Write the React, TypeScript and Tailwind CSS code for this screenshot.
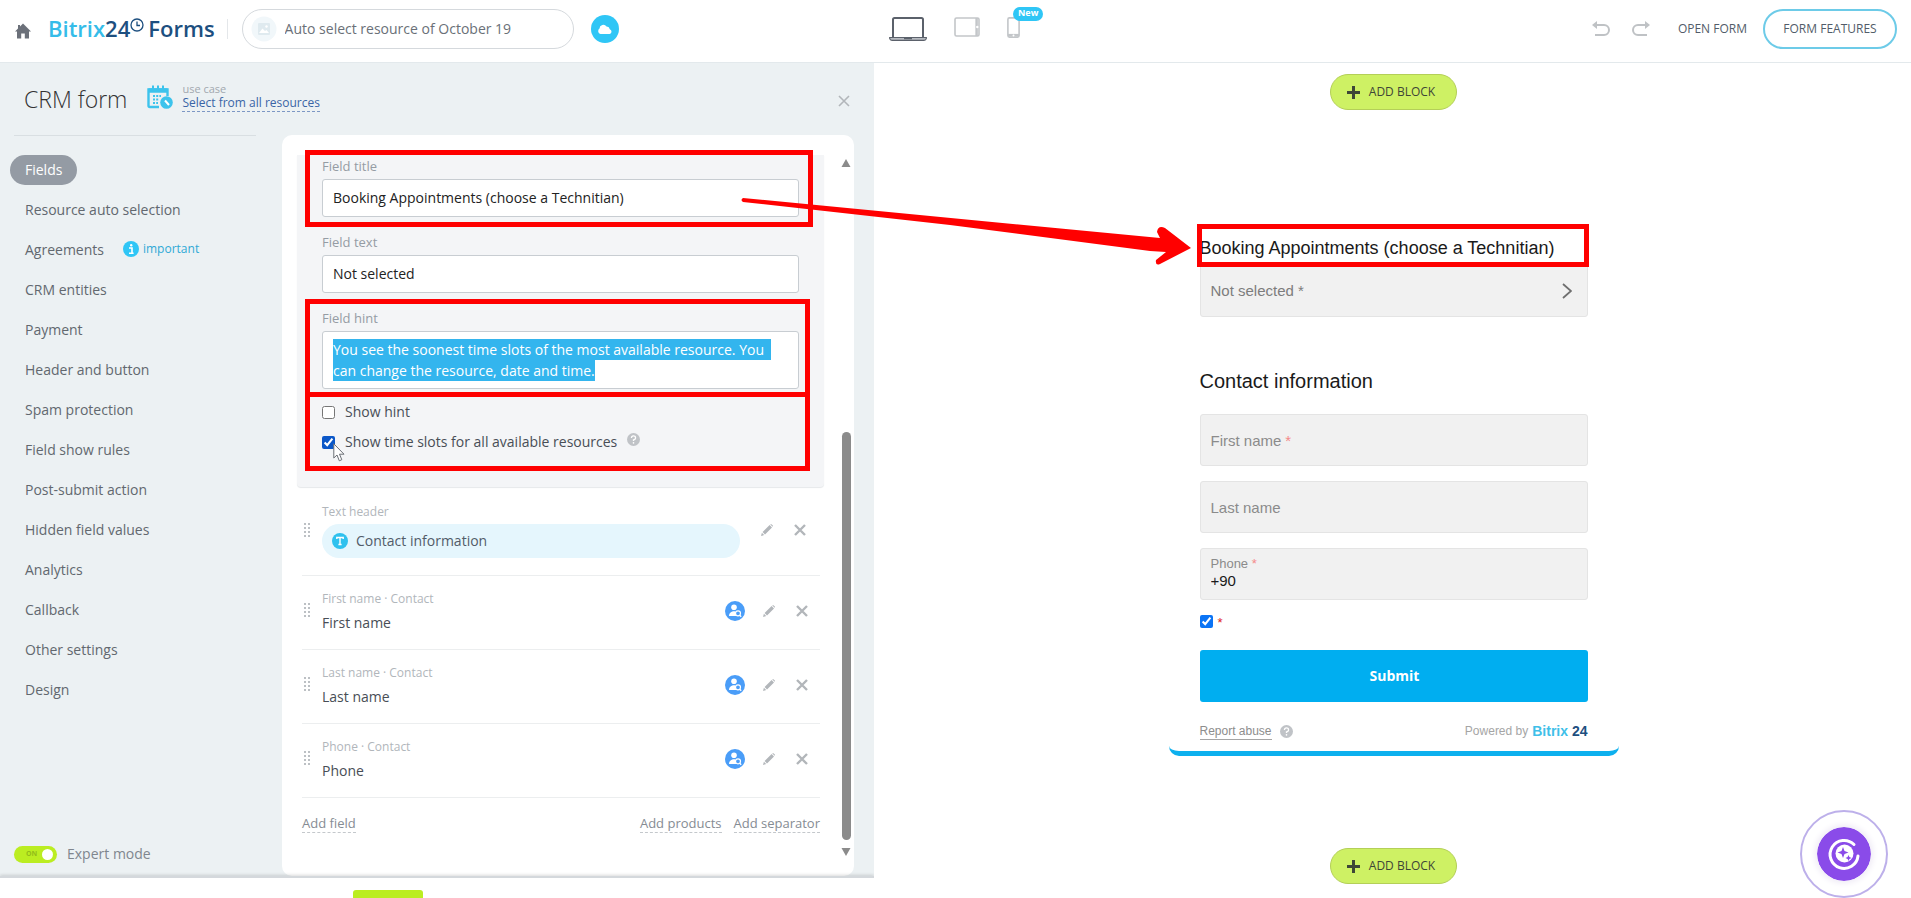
import { useEffect, useRef } from "react";
import type { ReactNode } from "react";

const menu = [
	"Fields",
	"Resource auto selection",
	"Agreements",
	"CRM entities",
	"Payment",
	"Header and button",
	"Spam protection",
	"Field show rules",
	"Post-submit action",
	"Hidden field values",
	"Analytics",
	"Callback",
	"Other settings",
	"Design",
];

const contactFields = ["First name", "Last name", "Phone"];

const App = () => {
	return (
		<div className="relative flex h-screen flex-col overflow-hidden bg-white font-['Open_Sans',sans-serif] text-sm text-[#525c69]">
			<TopBar />
			<main className="grid min-h-0 flex-1 grid-cols-[874fr_1037fr]">
				<Editor />
				<Preview />
			</main>
			<Arrow />
		</div>
	);
};
export default App;

const TopBar = () => {
	return (
		<header className="grid h-[63px] flex-none grid-cols-[889fr_1022fr] border-b border-[#e3e9ec] pb-1">
			<div className="flex items-center pl-[15px]">
				<a href="#home" aria-label="Home">
					<svg viewBox="0 0 16 16" className="mt-1 h-4 w-4 fill-[#6b7079]">
						<path d="M8 0.5 L16 8.6 L14 8.6 L14 15.5 L9.8 15.5 L9.8 10.5 L6.2 10.5 L6.2 15.5 L2 15.5 L2 8.6 L0 8.6 L3 5.5 L3 2 L5 2 L5 3.5 Z" />
					</svg>
				</a>
				<div className="ml-[17px] flex items-center text-[22px] font-semibold text-[#1d4f7f]">
					<span className="text-[#35bce9]">Bitrix</span>
					<span>24</span>
					<svg viewBox="0 0 14 14" className="mb-2 h-3.5 w-3.5 fill-none stroke-[#1d4f7f]" strokeWidth="1.3">
						<circle cx="7" cy="7" r="6" />
						<path d="M7 3.5 V7.5 H10" />
					</svg>
					<span className="ml-1">Forms</span>
				</div>
				<div className="ml-3 h-5 w-px bg-[#e4e7ea]" />
				<label className="ml-3.5 flex h-10 w-[332px] items-center rounded-full border border-[#d5d9dd] pl-2">
					<svg viewBox="0 0 26 26" className="h-[26px] w-[26px]">
						<circle cx="13" cy="13" r="12.5" fill="#f1f7fa" />
						<rect x="7" y="7" width="12" height="12" rx="1" fill="#dfeaef" />
						<path d="M8 17 L11.5 12.5 L14 15 L15.5 14 L18 17 Z" fill="#fff" />
						<circle cx="15.5" cy="10.5" r="1.2" fill="#fff" />
					</svg>
					<input
						aria-label="Form name"
						defaultValue="Auto select resource of October 19"
						className="ml-2 min-w-0 flex-1 bg-transparent text-sm text-[#6a7078] outline-none"
					/>
				</label>
				<button aria-label="Cloud" className="ml-[17px] flex h-7 w-7 items-center justify-center rounded-full bg-[#2fc6f6]">
					<svg viewBox="0 0 16 12" className="h-3 w-4 fill-white">
						<path d="M3.5 11 A3 3 0 0 1 2.5 5.6 A3.8 3.8 0 0 1 9.5 3.6 A3.2 3.2 0 0 1 12.8 6.2 A2.5 2.5 0 0 1 12.6 11 Z" />
					</svg>
				</button>
			</div>
			<div className="flex items-center pr-3.5">
				<button aria-label="Desktop">
					<svg viewBox="0 0 38 24" className="h-6 w-[38px] fill-none stroke-[#5b616b]">
						<path d="M4 20 V2.5 Q4 1 5.5 1 H32.5 Q34 1 34 2.5 V20" strokeWidth="2" />
						<path d="M0.7 20.5 H37.3 V21.5 Q37 23.3 35 23.3 H3 Q1 23.3 0.7 21.5 Z" fill="#b7bbc1" strokeWidth="1.2" />
						<path d="M15 21.5 H23" strokeWidth="1.5" />
					</svg>
				</button>
				<button aria-label="Tablet" className="ml-[27px]">
					<svg viewBox="0 0 26 20" className="mb-1 h-5 w-[26px] fill-none stroke-[#c3c6c9]">
						<rect x="1" y="1" width="24" height="18" rx="1.5" strokeWidth="1.6" />
						<path d="M22.6 1 V19" strokeWidth="2.5" />
						<circle cx="23.3" cy="10" r="1.2" fill="#fff" stroke="none" />
					</svg>
				</button>
				<button aria-label="Phone" className="relative ml-[27px]">
					<svg viewBox="0 0 13 21" className="mb-1 h-[21px] w-[13px] fill-none stroke-[#c3c6c9]">
						<rect x="0.9" y="0.9" width="11.2" height="19.2" rx="1.5" strokeWidth="1.6" />
						<path d="M1 18.2 H12" strokeWidth="2.6" />
						<circle cx="6.5" cy="18.5" r="1" fill="#fff" stroke="none" />
					</svg>
					<span className="absolute -top-2.5 left-1.5 flex h-3.5 items-center rounded-full bg-[#2fc6f6] px-[5px] text-[9px] font-bold text-white">New</span>
				</button>
				<div className="flex-1" />
				<button aria-label="Undo">
					<UndoIcon />
				</button>
				<button aria-label="Redo" className="ml-[22px] -scale-x-100">
					<UndoIcon />
				</button>
				<a href="#open" className="ml-7 text-xs text-[#525c69]">
					OPEN FORM
				</a>
				<button className="ml-4 h-10 w-[134px] rounded-full border-2 border-[#6dcbe8] text-xs">FORM FEATURES</button>
			</div>
		</header>
	);
};

const UndoIcon = () => {
	return (
		<svg viewBox="0 0 18 16" className="h-4 w-[18px] fill-none stroke-[#bfc2c5]" strokeWidth="2">
			<path d="M4 4 H12 A5 5 0 0 1 12 14 H3" />
			<path d="M5 0 L0 4 L5 8 Z" fill="#bfc2c5" stroke="none" />
		</svg>
	);
};

const Editor = () => {
	return (
		<section className="flex min-h-0 min-w-0 flex-col bg-[#ecf1f3]">
			<div className="flex h-[72px] flex-none items-start pl-6 pr-6 pt-5">
				<h1 className="text-[23px] leading-8 font-light text-[#333]">CRM form</h1>
				<svg viewBox="0 0 26 24" className="ml-5 mt-0.5 h-6 w-[26px] fill-none stroke-[#3cc3ec]">
					<path d="M12 22 H3 Q1.5 22 1.5 20.5 V4.5 H20.5 V11" strokeWidth="2.4" />
					<path d="M1.5 5.5 H20.5" strokeWidth="4.5" />
					<path d="M6 0.5 V4 M11 0.5 V4 M16 0.5 V4" strokeWidth="2" />
					<path d="M6 11 H14 M6 14.5 H12 M6 18 H11" strokeWidth="2" strokeDasharray="2 1.2" />
					<circle cx="19.5" cy="17.5" r="6.3" fill="#3cc3ec" stroke="none" />
					<path d="M18 15.5 L22 20" stroke="#fff" strokeWidth="2" />
				</svg>
				<div className="ml-[9px] flex flex-col items-start">
					<span className="text-[11px] leading-3 text-[#a2a8af]">use case</span>
					<a href="#case" className="border-b border-dashed border-[#7d97c4] text-xs leading-4 text-[#3a65a6]">
						Select from all resources
					</a>
				</div>
				<button aria-label="Close" className="ml-auto mt-3">
					<CrossIcon thin />
				</button>
			</div>
			<div className="flex min-h-0 flex-1">
				<Sidebar />
				<div className="mr-5 flex min-w-0 flex-1 rounded-[10px] bg-white pt-5 pl-[15px]">
					<FieldList />
					<Scrollbar />
				</div>
			</div>
			<footer className="relative flex h-[22px] flex-none items-start justify-center overflow-hidden border-t-2 border-[#d4d8dc] bg-white pt-3 pr-[98px] shadow-[0_-1px_3px_rgba(0,0,0,0.15)]">
				<button aria-label="Save" className="h-10 w-[70px] flex-none rounded-[3px] bg-[#bbed21]" />
			</footer>
		</section>
	);
};

const Sidebar = () => {
	return (
		<aside className="flex w-[282px] flex-none flex-col pb-3">
			<nav className="ml-3.5 mr-[26px] flex flex-col items-start border-t border-[#d9dfe2] pt-3.5">
				{menu.map((item, i) => (
					<div key={item} className="-ml-1 flex h-10 items-center">
						<a
							href={`#menu${i}`}
							className={i === 0 ? "flex h-[30px] items-center rounded-full bg-[#949ba4] px-[15px] text-white" : "px-[15px] text-[#62686f]"}
						>
							{item}
						</a>
						{item === "Agreements" && (
							<span className="ml-1 flex items-center gap-1 pb-0.5 text-xs text-[#2fa9d6]">
								<svg viewBox="0 0 16 16" className="h-4 w-4">
									<circle cx="8" cy="8" r="8" fill="#2fc6f6" />
									<path d="M6 7 H9 V12 M6 12.2 H10.6" fill="none" stroke="#fff" strokeWidth="1.6" />
									<circle cx="8.2" cy="4.2" r="1.2" fill="#fff" />
								</svg>
								important
							</span>
						)}
					</div>
				))}
			</nav>
			<label className="mt-auto ml-3.5 flex items-center gap-2.5 text-[#80868e]">
				<input type="checkbox" role="switch" defaultChecked className="peer sr-only" />
				<span className="flex h-[17px] w-[43px] items-center justify-between rounded-full bg-[#bbed21] pr-1 pl-3 text-[7px] font-bold text-[#93bd1a]">
					ON
					<span className="h-[11px] w-[11px] rounded-full bg-white" />
				</span>
				Expert mode
			</label>
		</aside>
	);
};

const Highlight = ({ className }: { className: string }) => {
	return <div className={`pointer-events-none absolute z-10 border-5 border-[#ff0000] ${className}`} />;
};

const labelStyle = "block h-6 text-[13px] leading-[22px] text-[#959ca4]";
const inputStyle = "block h-[38px] w-full rounded-[3px] border border-[#c8cdd2] bg-white px-2.5 pb-0.5 text-sm text-[#222] outline-none";

const FieldList = () => {
	const hint = useRef<HTMLTextAreaElement>(null);

	useEffect(() => {
		hint.current?.focus({ preventScroll: true });
		hint.current?.select();
	}, []);

	return (
		<div className="min-w-0 flex-1">
			<div className="h-[332px] rounded-b bg-[#f4f5f7] pr-[25px] pl-[25px] shadow-[0_1px_1px_#e6e8ea]">
				<div className="relative h-[76px]">
					<label htmlFor="title" className={labelStyle}>
						Field title
					</label>
					<input id="title" defaultValue="Booking Appointments (choose a Technitian)" className={inputStyle} />
					<Highlight className="-top-[5px] -right-3.5 -left-[17px] h-[77px]" />
				</div>
				<div className="h-[76px]">
					<label htmlFor="text" className={labelStyle}>
						Field text
					</label>
					<input id="text" defaultValue="Not selected" className={inputStyle} />
				</div>
				<div className="relative h-[88px]">
					<label htmlFor="hint" className={labelStyle}>
						Field hint
					</label>
					<textarea
						id="hint"
						ref={hint}
						defaultValue="You see the soonest time slots of the most available resource. You can change the resource, date and time."
						className="block h-[58px] w-full resize-none overflow-hidden rounded-[3px] border border-[#c8cdd2] bg-white px-2.5 pt-[7px] text-sm leading-[21px] text-[#222] caret-transparent outline-none selection:bg-[#33b5ee] selection:text-white"
					/>
					<Highlight className="-top-2 -right-[11px] -left-[17px] h-[98px]" />
				</div>
				<div className="relative flex flex-col pt-0.5 text-[#484e56]">
					<label className="flex h-[30px] items-center gap-2.5">
						<input type="checkbox" className="h-[13px] w-[13px]" />
						Show hint
					</label>
					<label className="flex h-[30px] items-center gap-2.5">
						<input type="checkbox" defaultChecked className="h-[13px] w-[13px] accent-[#0b57c8]" />
						Show time slots for all available resources
						<span className="pb-1.5">
							<HelpIcon />
						</span>
					</label>
					<Highlight className="-top-[3px] -right-[11px] -left-[17px] h-[79px]" />
					<svg viewBox="0 0 12 19" className="absolute top-12 left-[11px] z-20 h-[19px] w-3 fill-white stroke-[#6b6f76]">
						<path d="M0.8 0.8 V15 L4 12 L6.3 17.8 L8.8 16.7 L6.5 11.2 H11 Z" />
					</svg>
				</div>
			</div>
			<div className="mr-1 ml-[5px]">
				<div className="flex h-[89px] items-center border-b border-[#eceeef] pr-3.5 pb-0.5">
					<DragDots />
					<div className="min-w-0 flex-1 pt-0.5 pr-[21px] pl-3">
						<div className="text-xs leading-4 text-[#b1b6bb]">Text header</div>
						<div className="mt-1 flex h-[34px] items-center gap-2 rounded-full bg-[#e5f6fd] pl-2.5">
							<svg viewBox="0 0 16 16" className="h-4 w-4">
								<circle cx="8" cy="8" r="8" fill="#2fc1ee" />
								<path d="M4.8 6 V4.5 H11.2 V6 M8 4.5 V11.5 M6.4 11.5 H9.6" fill="none" stroke="#fff" strokeWidth="1.4" />
							</svg>
							Contact information
						</div>
					</div>
					<PencilIcon />
					<button aria-label="Delete" className="ml-[21px]">
						<CrossIcon />
					</button>
				</div>
				{contactFields.map((field) => (
					<div key={field} className="flex h-[74px] items-center border-b border-[#eceeef] pr-3 pb-1">
						<DragDots />
						<div className="min-w-0 flex-1 pt-1 pl-3">
							<div className="text-xs leading-4 text-[#b1b6bb]">{field} · Contact</div>
							<div className="mt-1 leading-6 text-[#484e56]">{field}</div>
						</div>
						<svg viewBox="0 0 20 20" className="h-5 w-5">
							<circle cx="10" cy="10" r="10" fill="#4a9df8" />
							<circle cx="9" cy="6.3" r="2.8" fill="#fff" />
							<path d="M4 15 Q4 11.5 8 10.3 H10 L12 15 Z" fill="#fff" />
							<circle cx="13" cy="12.3" r="2.5" fill="#4a9df8" stroke="#fff" strokeWidth="1.2" />
							<path d="M14.8 14.2 L16.2 15.8" stroke="#fff" strokeWidth="1.3" />
						</svg>
						<span className="ml-[18px]">
							<PencilIcon />
						</span>
						<button aria-label={`Delete ${field}`} className="ml-[21px]">
							<CrossIcon />
						</button>
					</div>
				))}
				<div className="flex gap-3 pt-[17px] text-[13px] text-[#868c93]">
					<button className="mr-auto border-b border-dashed border-[#c4c8cc] leading-[17px]">Add field</button>
					<button className="border-b border-dashed border-[#c4c8cc] leading-[17px]">Add products</button>
					<button className="border-b border-dashed border-[#c4c8cc] leading-[17px]">Add separator</button>
				</div>
			</div>
		</div>
	);
};

const Scrollbar = () => {
	return (
		<div className="flex w-[30px] flex-none flex-col items-center pt-1 pl-[14px]">
			<svg viewBox="0 0 10 8" className="h-2 w-2.5 fill-[#8b8b8b]">
				<path d="M5 0 L9.5 8 H0.5 Z" />
			</svg>
			<div className="flex w-[9px] flex-1 flex-col pt-1.5 pb-2">
				<div className="flex-[259]" />
				<div className="flex-[408] rounded-full bg-[#8b8b8b]" />
			</div>
			<svg viewBox="0 0 10 8" className="mb-5 h-2 w-2.5 fill-[#8b8b8b]">
				<path d="M5 8 L9.5 0 H0.5 Z" />
			</svg>
		</div>
	);
};

const Preview = () => {
	return (
		<section className="relative flex min-h-0 min-w-0 flex-col items-center bg-white pt-[11px] pl-0.5 font-['Liberation_Sans',Arial,sans-serif]">
			<AddBlock />
			<form className="mt-[114px] flex w-[450px] flex-col rounded-b-[10px] border-b-5 border-[#0db0ee] px-[31px] pb-2.5">
				<div className="relative flex h-[43px] items-center text-lg text-[#1a1a1a]">
					<label htmlFor="booking" className="pt-1">
						Booking Appointments (choose a Technitian)
					</label>
					<Highlight className="inset-y-0 -right-px -left-[3px]" />
				</div>
				<button
					id="booking"
					type="button"
					className="-mt-1 flex h-[54px] items-center justify-between rounded-[3px] border border-[#e4e4e4] bg-[#f1f1f1] px-[10px] pt-0.5 text-[#7d7d7d]"
				>
					<span className="text-[15px]">Not selected *</span>
					<svg viewBox="0 0 10 16" className="mr-[5px] h-4 w-2.5 fill-none stroke-[#6f6f6f]" strokeWidth="1.8">
						<path d="M1 1 L9 8 L1 15" />
					</svg>
				</button>
				<h2 className="mt-[49px] text-xl leading-[30px] text-[#1a1a1a]">Contact information</h2>
				<div className="mt-[18px] flex flex-col gap-[15px]">
					<PreviewField id="first" label="First name" required />
					<PreviewField id="last" label="Last name" />
					<div className="h-[52px] rounded-[3px] border border-[#e4e4e4] bg-[#f1f1f1] px-[10px] pt-[7px]">
						<label htmlFor="phone" className="block text-[13px] leading-4 text-[#8b8b8b]">
							Phone <span className="text-[#f58a8a]">*</span>
						</label>
						<input id="phone" defaultValue="+90" className="block w-full bg-transparent text-[15px] leading-[18px] text-[#1a1a1a] outline-none" />
					</div>
				</div>
				<label className="mt-[15px] flex h-[13px] items-center gap-[5px] text-[13px] text-[#e02020]">
					<input type="checkbox" defaultChecked className="h-[13px] w-[13px] accent-[#0b74f5]" />
					<span className="pt-1">*</span>
				</label>
				<button type="button" className="mt-[22px] h-[52px] rounded-[3px] bg-[#00aef0] pl-0.5 font-['Open_Sans',sans-serif] text-sm font-bold text-white">
					Submit
				</button>
				<div className="mt-[19px] flex items-center text-xs text-[#a5a5a5]">
					<a href="#abuse" className="border-b border-[#a5a5a5] leading-4 text-[#8d8d8d]">
						Report abuse
					</a>
					<span className="ml-2">
						<HelpIcon />
					</span>
					<span className="ml-auto">Powered by</span>
					<span className="ml-1 text-sm font-bold text-[#3fbfe9]">
						Bitrix <span className="text-[#1d4f7f]">24</span>
					</span>
				</div>
			</form>
			<div className="mt-auto mb-3.5">
				<AddBlock />
			</div>
			<button
				aria-label="Assistant"
				className="absolute right-[23px] bottom-0 flex h-[88px] w-[88px] items-center justify-center rounded-full border-2 border-[#bdb0ea] bg-white"
			>
				<svg viewBox="0 0 54 54" className="h-[54px] w-[54px] rounded-full fill-none shadow-[0_0_6px_2px_#eeeaf5]">
					<circle cx="27" cy="27" r="27" fill="#8a4be9" />
					<path d="M37 17.5 A14 14 0 1 0 41 29" stroke="#fff" strokeWidth="3" strokeLinecap="round" />
					<circle cx="27.5" cy="26.5" r="9" fill="#fff" />
					<path d="M26 20 L27.5 24 L31.5 25.5 L27.5 27 L26 31 L24.5 27 L20.5 25.5 L24.5 24 Z" fill="#8a4be9" />
					<path d="M31.5 28 L32.4 30.1 L34.5 31 L32.4 31.9 L31.5 34 L30.6 31.9 L28.5 31 L30.6 30.1 Z" fill="#8a4be9" />
				</svg>
			</button>
		</section>
	);
};

const AddBlock = () => {
	return (
		<button
			type="button"
			className="flex h-9 w-[127px] items-center justify-center gap-[9px] rounded-full border border-[#b4cf58] bg-[#cef164] pr-[5px] font-['Open_Sans',sans-serif] text-xs text-[#3e4637]"
		>
			<svg viewBox="0 0 13 13" className="h-[13px] w-[13px] stroke-[#3e4637]" strokeWidth="3">
				<path d="M6.5 0 V13 M0 6.5 H13" />
			</svg>
			ADD BLOCK
		</button>
	);
};

const PreviewField = ({ id, label, required }: { id: string; label: ReactNode; required?: boolean }) => {
	return (
		<div className="relative h-[52px] rounded-[3px] border border-[#e4e4e4] bg-[#f1f1f1]">
			<input id={id} className="h-full w-full bg-transparent px-[10px] text-[15px] outline-none" />
			<label htmlFor={id} className="absolute inset-0 flex items-center gap-1 px-[10px] pt-0.5 text-[15px] text-[#8b8b8b]">
				{label} {required && <span className="text-[#f58a8a]">*</span>}
			</label>
		</div>
	);
};

const HelpIcon = () => {
	return (
		<svg viewBox="0 0 14 14" className="h-[13px] w-[13px]">
			<circle cx="7" cy="7" r="7" fill="#c0c3c7" />
			<path d="M4.8 5.4 A2.2 2.2 0 1 1 7 7.4 V8.6" fill="none" stroke="#fff" strokeWidth="1.4" />
			<circle cx="7" cy="10.6" r="0.9" fill="#fff" />
		</svg>
	);
};

const DragDots = () => {
	return (
		<svg viewBox="0 0 6 15" className="ml-0.5 h-[15px] w-1.5 fill-[#bcc0c4]">
			{[0, 4, 8, 12].map((y) => (
				<path key={y} d={`M0 ${y} h2 v2 h-2 Z M4 ${y} h2 v2 h-2 Z`} />
			))}
		</svg>
	);
};

const PencilIcon = () => {
	return (
		<button aria-label="Edit" className="block">
			<svg viewBox="0 0 12 12" className="h-3 w-3 fill-[#b2b6ba]">
				<path d="M0 12 L0.9 8.8 L3.2 11.1 Z M1.6 8 L8.6 1 L11 3.4 L4 10.4 Z M9.3 0.4 Q10 -0.3 10.7 0.4 L11.6 1.3 Q12.3 2 11.6 2.7 Z" />
			</svg>
		</button>
	);
};

const CrossIcon = ({ thin }: { thin?: boolean }) => {
	return (
		<svg viewBox="0 0 12 12" className="h-3 w-3 stroke-[#b2b6ba]" strokeWidth={thin ? 1.6 : 2.4}>
			<path d="M1 1 L11 11 M11 1 L1 11" />
		</svg>
	);
};

const Arrow = () => {
	return (
		<svg viewBox="740 195 455 75" className="pointer-events-none absolute top-[195px] left-[740px] z-20 h-[75px] w-[455px]">
			<path
				d="M743 198 L1160 238 L1157 232 Q1158 225 1165 228 L1191 248 L1160 264 Q1155 266 1156 260 L1166 252 L1150 251 L950 225 L743 202 Q740 200 743 198 Z"
				fill="#ff0000"
			/>
		</svg>
	);
};
